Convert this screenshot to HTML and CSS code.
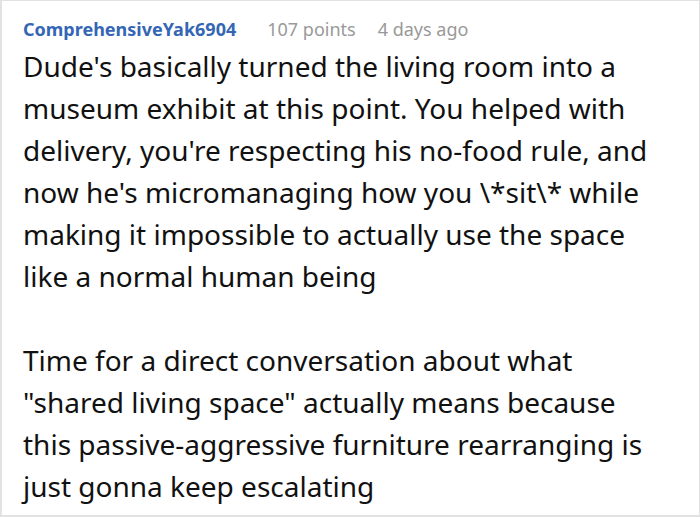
FILE: index.html
```html
<!DOCTYPE html>
<html>
<head>
<meta charset="utf-8">
<link rel="stylesheet" href="styles.css">
</head>
<body>
<div class="comment">
  <div class="meta">
    <span class="author">ComprehensiveYak6904</span>
    <span class="points">107 points</span>
    <span class="time">4 days ago</span>
  </div>
  <div class="body">
    <p>Dude's basically turned the living room into a museum exhibit at this point. You helped with delivery, you're respecting his no-food rule, and now he's micromanaging how you \*sit\* while making it impossible to actually use the space like a normal human being</p>
    <p>Time for a direct conversation about what "shared living space" actually means because this passive-aggressive furniture rearranging is just gonna keep escalating</p>
  </div>
</div>
</body>
</html>
```

FILE: styles.css
```css
html, body {
  margin: 0;
  padding: 0;
  background: #fff;
}
.comment {
  box-sizing: border-box;
  width: 700px;
  height: 517px;
  border: 1px solid #e2e2e2;
  border-left-width: 2px;
  border-bottom-width: 2px;
  padding: 16px 44px 0 21px;
  font-family: "Noto Sans", "Open Sans", sans-serif;
  overflow: hidden;
}
.meta {
  display: flex;
  align-items: baseline;
  font-size: 18px;
  line-height: 24px;
}
.author {
  color: #3466b5;
  font-weight: 700;
  margin-right: 31px;
}
.points {
  color: #999;
  margin-right: 22px;
}
.time {
  color: #999;
}
.body {
  margin-top: 4px;
  color: #111;
  font-size: 28px;
  line-height: 42px;
}
.body p {
  margin: 0 0 42px 0;
}
```
